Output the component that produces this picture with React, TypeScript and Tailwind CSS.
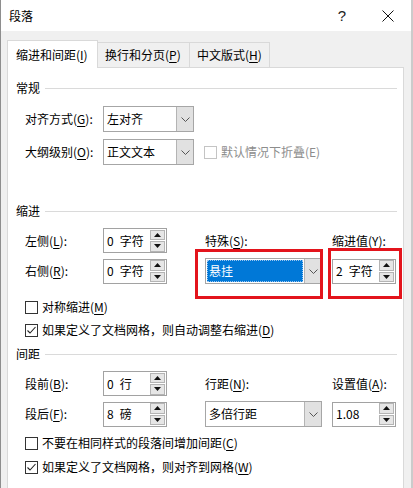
import React from 'react'

function U({ children }: { children: React.ReactNode }) {
  return <span className="underline underline-offset-[2px]">{children}</span>
}

function Label({ text, k }: { text: string; k: string }) {
  return (
    <span className="whitespace-nowrap">
      {text}(<U>{k}</U>):
    </span>
  )
}

function SpinButton({ up }: { up?: boolean }) {
  return (
    <div className="flex flex-1 items-center justify-center border border-[#b4b4b4] bg-[#e6e6e6]">
      <svg width="7" height="4" viewBox="0 0 7 4">
        {up ? <path d="M0 4 L3.5 0 L7 4 Z" fill="#111" /> : <path d="M0 0 L3.5 4 L7 0 Z" fill="#111" />}
      </svg>
    </div>
  )
}

function Spinner({ value }: { value: string }) {
  return (
    <div className="flex h-[25px] w-[64px] items-center border border-[#a2a2a2] bg-white pl-[3px]">
      <span className="flex-1 whitespace-pre">{value.replace(' ', '\u2002')}</span>
      <div className="mr-[1px] flex h-[22px] w-[15px] flex-col gap-px">
        <SpinButton up />
        <SpinButton />
      </div>
    </div>
  )
}

function Chevron() {
  return (
    <svg width="9" height="5" viewBox="0 0 9 5">
      <path d="M0.5 0.5 L4.5 4.5 L8.5 0.5" fill="none" stroke="#555" strokeWidth="1" />
    </svg>
  )
}

function Select({ value, className, selected }: { value: string; className: string; selected?: boolean }) {
  return (
    <div className={`flex h-[26px] border border-[#a6a6a6] bg-white ${className}`}>
      {selected ? (
        <div className="flex flex-1 p-[1px]">
          <div className="flex flex-1 items-center border border-dotted border-[#9cc6ef] bg-[#0078d7] pl-[1px] text-white">
            {value}
          </div>
        </div>
      ) : (
        <div className="flex flex-1 items-center pl-[3px]">{value}</div>
      )}
      <div className="flex w-[17px] items-center justify-center border-l border-[#b4b4b4] bg-[#e1e1e1]">
        <Chevron />
      </div>
    </div>
  )
}

function Checkbox({ checked, disabled }: { checked?: boolean; disabled?: boolean }) {
  return (
    <div
      className={`flex h-[13px] w-[13px] items-center justify-center border bg-white ${
        disabled ? 'border-[#c4c4c4]' : 'border-[#333]'
      }`}
    >
      {checked && (
        <svg width="11" height="11" viewBox="0 0 11 11">
          <path d="M1.5 5.5 L4 8 L9.5 2" fill="none" stroke="#222" strokeWidth="1.1" />
        </svg>
      )}
    </div>
  )
}

function CheckRow({ checked, children, className }: { checked?: boolean; children: React.ReactNode; className: string }) {
  return (
    <div className={`ml-[9px] flex h-[18px] items-center gap-[4px] ${className}`}>
      <Checkbox checked={checked} />
      <span className="whitespace-nowrap">{children}</span>
    </div>
  )
}

function Heading({ title, className }: { title: string; className: string }) {
  return (
    <div className={`flex h-[16px] items-center ${className}`}>
      <span>{title}</span>
      <div className="ml-[5px] h-px flex-1 bg-[#dadada]" />
    </div>
  )
}

function RedBox({ className }: { className: string }) {
  return <div className={`pointer-events-none absolute border-[3px] border-[#e3141c] ${className}`} />
}

export default function App() {
  return (
    <div className="relative h-[488px] w-[413px] overflow-hidden border-l border-r-2 border-l-[#8e8e8e] border-r-[#cbcbcb] bg-[#f0f0f0] font-['Noto_Sans_CJK_SC',sans-serif] text-[12px] leading-[16px] text-black">
      {/* title bar */}
      <div className="flex h-[31px] items-center bg-white">
        <span className="pl-[8px]">段落</span>
        <div className="ml-auto flex h-full">
          <div className="flex w-[46px] items-center justify-center font-['Liberation_Sans',sans-serif] text-[15px] text-[#222]">?</div>
          <div className="flex w-[46px] items-center justify-center">
            <svg width="12" height="12" viewBox="0 0 12 12">
              <path d="M0.5 0.5 L11.5 11.5 M11.5 0.5 L0.5 11.5" stroke="#111" strokeWidth="1" />
            </svg>
          </div>
        </div>
      </div>

      {/* tabs */}
      <div className="mt-[9px] flex items-end pl-[6px]">
        <div className="relative z-10 -mb-px flex h-[28px] w-[91px] items-center border border-b-0 border-[#d9d9d9] bg-white pl-[8px]">
          缩进和间距(<U>I</U>)
        </div>
        <div className="flex h-[25px] w-[92px] items-center border-t border-r border-[#d9d9d9] bg-[#f0f0f0] pl-[7px]">
          换行和分页(<U>P</U>)
        </div>
        <div className="flex h-[25px] w-[80px] items-center border-t border-r border-[#d9d9d9] bg-[#f0f0f0] pl-[7px]">
          中文版式(<U>H</U>)
        </div>
      </div>

      {/* panel */}
      <div className="ml-[6px] h-[440px] w-[397px] border border-[#d9d9d9] bg-white pr-[6px] pl-[8px]">
        <Heading title="常规" className="mt-[12px]" />

        <div className="mt-[10px] ml-[9px] flex h-[26px] items-center">
          <div className="w-[78px]">
            <Label text="对齐方式" k="G" />
          </div>
          <Select value="左对齐" className="w-[91px]" />
        </div>
        <div className="mt-[7px] ml-[9px] flex h-[26px] items-center">
          <div className="w-[78px]">
            <Label text="大纲级别" k="O" />
          </div>
          <Select value="正文文本" className="w-[91px]" />
          <div className="ml-[10px] flex items-center gap-[4px]">
            <Checkbox disabled />
            <span className="text-[#8d8d8d]">默认情况下折叠(E)</span>
          </div>
        </div>

        <Heading title="缩进" className="mt-[38px]" />

        <div className="mt-[9px] ml-[9px] grid grid-cols-[78px_64px_38px_117px_10px_64px] grid-rows-[25px_26px] items-center gap-y-[5px]">
          <Label text="左侧" k="L" />
          <Spinner value="0 字符" />
          <div />
          <Label text="特殊" k="S" />
          <div />
          <Label text="缩进值" k="Y" />

          <Label text="右侧" k="R" />
          <Spinner value="0 字符" />
          <div />
          <div className="relative">
            <Select value="悬挂" className="w-[117px]" selected />
            <RedBox className="-top-[9px] -right-[1px] -bottom-[15px] -left-[10px]" />
          </div>
          <div />
          <div className="relative">
            <Spinner value="2 字符" />
            <RedBox className="-top-[11px] -right-[6px] -bottom-[15px] -left-[4px]" />
          </div>
        </div>

        <CheckRow className="mt-[14px]">
          对称缩进(<U>M</U>)
        </CheckRow>
        <CheckRow checked className="mt-[5px]">
          如果定义了文档网格，则自动调整右缩进(<U>D</U>)
        </CheckRow>

        <Heading title="间距" className="mt-[7px]" />

        <div className="mt-[9px] ml-[9px] grid grid-cols-[78px_64px_38px_117px_10px_64px] grid-rows-[25px_26px] items-center gap-y-[5px]">
          <Label text="段前" k="B" />
          <Spinner value="0 行" />
          <div />
          <Label text="行距" k="N" />
          <div />
          <Label text="设置值" k="A" />

          <Label text="段后" k="F" />
          <Spinner value="8 磅" />
          <div />
          <Select value="多倍行距" className="w-[117px]" />
          <div />
          <Spinner value="1.08" />
        </div>

        <CheckRow className="mt-[7px]">
          不要在相同样式的段落间增加间距(<U>C</U>)
        </CheckRow>
        <CheckRow checked className="mt-[6px]">
          如果定义了文档网格，则对齐到网格(<U>W</U>)
        </CheckRow>
      </div>
    </div>
  )
}
